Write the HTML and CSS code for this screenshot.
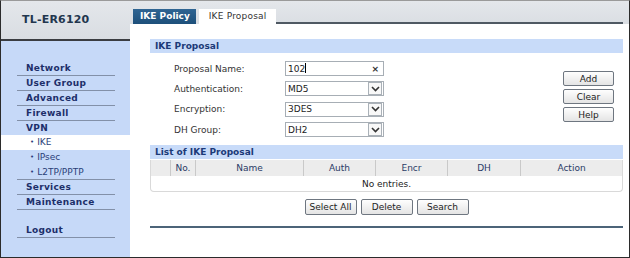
FILE: index.html
```html
<!DOCTYPE html>
<html lang="en">
<head>
    <meta charset="UTF-8">
    <title>IKE Proposal</title>
    <link rel="stylesheet" href="styles.css">
</head>
<body>

<div class="frame">
    <aside class="side">
        <div class="brand">TL-ER6120</div>
        <ul class="menu">
            <li class="item">Network</li>
            <li class="item">User Group</li>
            <li class="item">Advanced</li>
            <li class="item">Firewall</li>
            <li class="item open">VPN</li>
            <li class="sub active"><span class="dot">&bull;</span>IKE</li>
            <li class="sub"><span class="dot">&bull;</span>IPsec</li>
            <li class="sub last"><span class="dot">&bull;</span>L2TP/PPTP</li>
            <li class="item">Services</li>
            <li class="item">Maintenance</li>
            <li class="item logout">Logout</li>
        </ul>
    </aside>

    <main class="main">
        <div class="tabs">
            <span class="tab">IKE Policy</span>
            <span class="tab active">IKE Proposal</span>
        </div>

        <div class="content">
            <div class="bar">IKE Proposal</div>

            <div class="form-area">
                <div class="fields">
                    <div class="row">
                        <label for="name">Proposal Name:</label>
                        <div class="field" id="name"><span class="value">102<span class="caret"></span></span><span class="clear">&times;</span></div>
                    </div>
                    <div class="row">
                        <label>Authentication:</label>
                        <div class="field"><span class="value">MD5</span><span class="arrow"><svg width="9" height="6" viewBox="0 0 9 6"><path d="M1 1 L4.5 4.5 L8 1" fill="none" stroke="#333" stroke-width="1.6"/></svg></span></div>
                    </div>
                    <div class="row">
                        <label>Encryption:</label>
                        <div class="field"><span class="value">3DES</span><span class="arrow"><svg width="9" height="6" viewBox="0 0 9 6"><path d="M1 1 L4.5 4.5 L8 1" fill="none" stroke="#333" stroke-width="1.6"/></svg></span></div>
                    </div>
                    <div class="row">
                        <label>DH Group:</label>
                        <div class="field"><span class="value">DH2</span><span class="arrow"><svg width="9" height="6" viewBox="0 0 9 6"><path d="M1 1 L4.5 4.5 L8 1" fill="none" stroke="#333" stroke-width="1.6"/></svg></span></div>
                    </div>
                </div>
                <div class="side-buttons">
                    <button class="btn">Add</button>
                    <button class="btn">Clear</button>
                    <button class="btn">Help</button>
                </div>
            </div>

            <div class="bar">List of IKE Proposal</div>
            <table class="list">
                <tr class="head">
                    <th class="c-check"></th>
                    <th class="c-no">No.</th>
                    <th class="c-name">Name</th>
                    <th class="c-auth">Auth</th>
                    <th class="c-encr">Encr</th>
                    <th class="c-dh">DH</th>
                    <th>Action</th>
                </tr>
                <tr>
                    <td colspan="7" class="empty">No entries.</td>
                </tr>
            </table>

            <div class="actions">
                <button class="btn">Select All</button>
                <button class="btn">Delete</button>
                <button class="btn">Search</button>
            </div>

            <div class="rule"></div>
        </div>
    </main>
</div>

</body>
</html>
```

FILE: styles.css
```css
body {
    margin: 0;
    font-family: "DejaVu Sans", Verdana, sans-serif;
    font-size: 9px;
    color: #222;
}

.frame {
    width: 630px;
    height: 258px;
    box-sizing: border-box;
    border: 1px solid #2b2b2b;
    border-top-color: #9a9a9a;
    display: grid;
    grid-template-columns: 129px 1fr;
    background-color: #fff;
}

/* sidebar */
.side {
    display: flex;
    flex-direction: column;
    background-color: #c6d9f8;
}

.brand {
    height: 38px;
    line-height: 38px;
    padding-left: 21px;
    background: linear-gradient(#e4e7eb, #d9dde2);
    border-bottom: 2px solid #3a3d42;
    font-size: 11px;
    font-weight: bold;
    color: #22364e;
    letter-spacing: 0.2px;
}

.menu {
    list-style: none;
    margin: 0;
    padding: 20px 0 0 0;
}

.menu .item {
    height: 14px;
    line-height: 14px;
    margin: 0 15px 0 16px;
    padding-left: 9px;
    border-bottom: 1px solid #8290a8;
    font-weight: bold;
    color: #1d2f6a;
    letter-spacing: 0.3px;
}

.menu .item.open {
    border-bottom: none;
}

.menu .sub {
    height: 15px;
    line-height: 15px;
    padding-left: 29px;
    color: #2b3f78;
}

.menu .sub.active {
    background-color: #fff;
}

.menu .sub.last {
    height: 14px;
    margin: 0 15px 0 16px;
    padding-left: 13px;
    border-bottom: 1px solid #8290a8;
}

.menu .dot {
    font-size: 7px;
    margin-right: 3px;
    vertical-align: 1px;
}

.menu .logout {
    margin-top: 13px;
}

/* main column */
.main {
    display: flex;
    flex-direction: column;
}

.tabs {
    height: 15px;
    padding: 8px 6px 0 3px;
    display: flex;
    align-items: flex-end;
    gap: 3px;
    background: linear-gradient(#e4e7eb, #dadee3);
}

.tab {
    height: 15px;
    line-height: 15px;
    padding: 0 6px 0 7px;
    background: linear-gradient(#2f6593, #1d4f7a);
    color: #fff;
    font-weight: bold;
}

.tab.active {
    width: 67px;
    background: #fff;
    color: #333;
    font-weight: normal;
    padding: 0 0 0 10px;
    letter-spacing: 0.2px;
}

.tabs::after {
    content: "";
    flex: 1;
    height: 2px;
    background-color: #4f5963;
    margin-left: -3px;
}

.content {
    padding: 15px 6px 0 20px;
}

.bar {
    height: 14px;
    line-height: 14px;
    padding-left: 5px;
    background-color: #c8dbf9;
    font-weight: bold;
    color: #1c3a78;
}

.form-area {
    display: flex;
    justify-content: space-between;
    margin: 8px 0 8px 0;
}

.fields {
    padding-left: 24px;
    display: flex;
    flex-direction: column;
    gap: 5.4px;
}

.row {
    display: flex;
    align-items: center;
    height: 15px;
}

.row label {
    width: 111px;
    color: #333;
}

.field {
    width: 95px;
    height: 13px;
    border: 1px solid #a7aeb5;
    display: flex;
    align-items: center;
    justify-content: space-between;
    padding-left: 2px;
    box-sizing: content-box;
    color: #222;
}

.field .caret {
    display: inline-block;
    width: 1px;
    height: 10px;
    background-color: #000;
    vertical-align: -1px;
}

.field .clear {
    font-size: 9px;
    font-weight: bold;
    margin-right: 4px;
    color: #333;
}

.field .arrow {
    width: 12px;
    height: 11px;
    margin-right: 1px;
    border: 1px solid #aab1b8;
    display: flex;
    align-items: center;
    justify-content: center;
    background-color: #f8f8f8;
}

.side-buttons {
    display: flex;
    flex-direction: column;
    gap: 3px;
    margin: 10px 9px 0 0;
}

.btn {
    width: 51px;
    height: 15px;
    padding: 0;
    border: 1px solid #6e7680;
    border-radius: 2px;
    background: linear-gradient(#fefefe, #e4e4e4);
    font-family: "DejaVu Sans", Verdana, sans-serif;
    font-size: 9px;
    color: #222;
}

.list {
    width: 100%;
    margin-top: 1px;
    border-collapse: separate;
    border-spacing: 0;
    border: 1px solid #d9d9d9;
    border-top: none;
    border-radius: 0 0 4px 4px;
}

.list th {
    height: 16px;
    padding: 0;
    background-color: #ececec;
    font-weight: normal;
    color: #2a3b66;
    border-left: 1px solid #c9c9c9;
}

.list th:first-child {
    border-left: none;
}

.list .c-check { width: 19px; }
.list .c-no { width: 24px; }
.list .c-name { width: 107px; }
.list .c-auth { width: 71px; }
.list .c-encr { width: 71px; }
.list .c-dh { width: 72px; }

.list .empty {
    height: 15px;
    padding: 0;
    text-align: center;
    color: #222;
}

.actions {
    display: flex;
    justify-content: center;
    gap: 4px;
    margin-top: 7px;
}

.actions .btn {
    width: 52px;
    height: 16px;
}

.rule {
    height: 2px;
    margin-top: 11px;
    background-color: #4c6479;
}
```
